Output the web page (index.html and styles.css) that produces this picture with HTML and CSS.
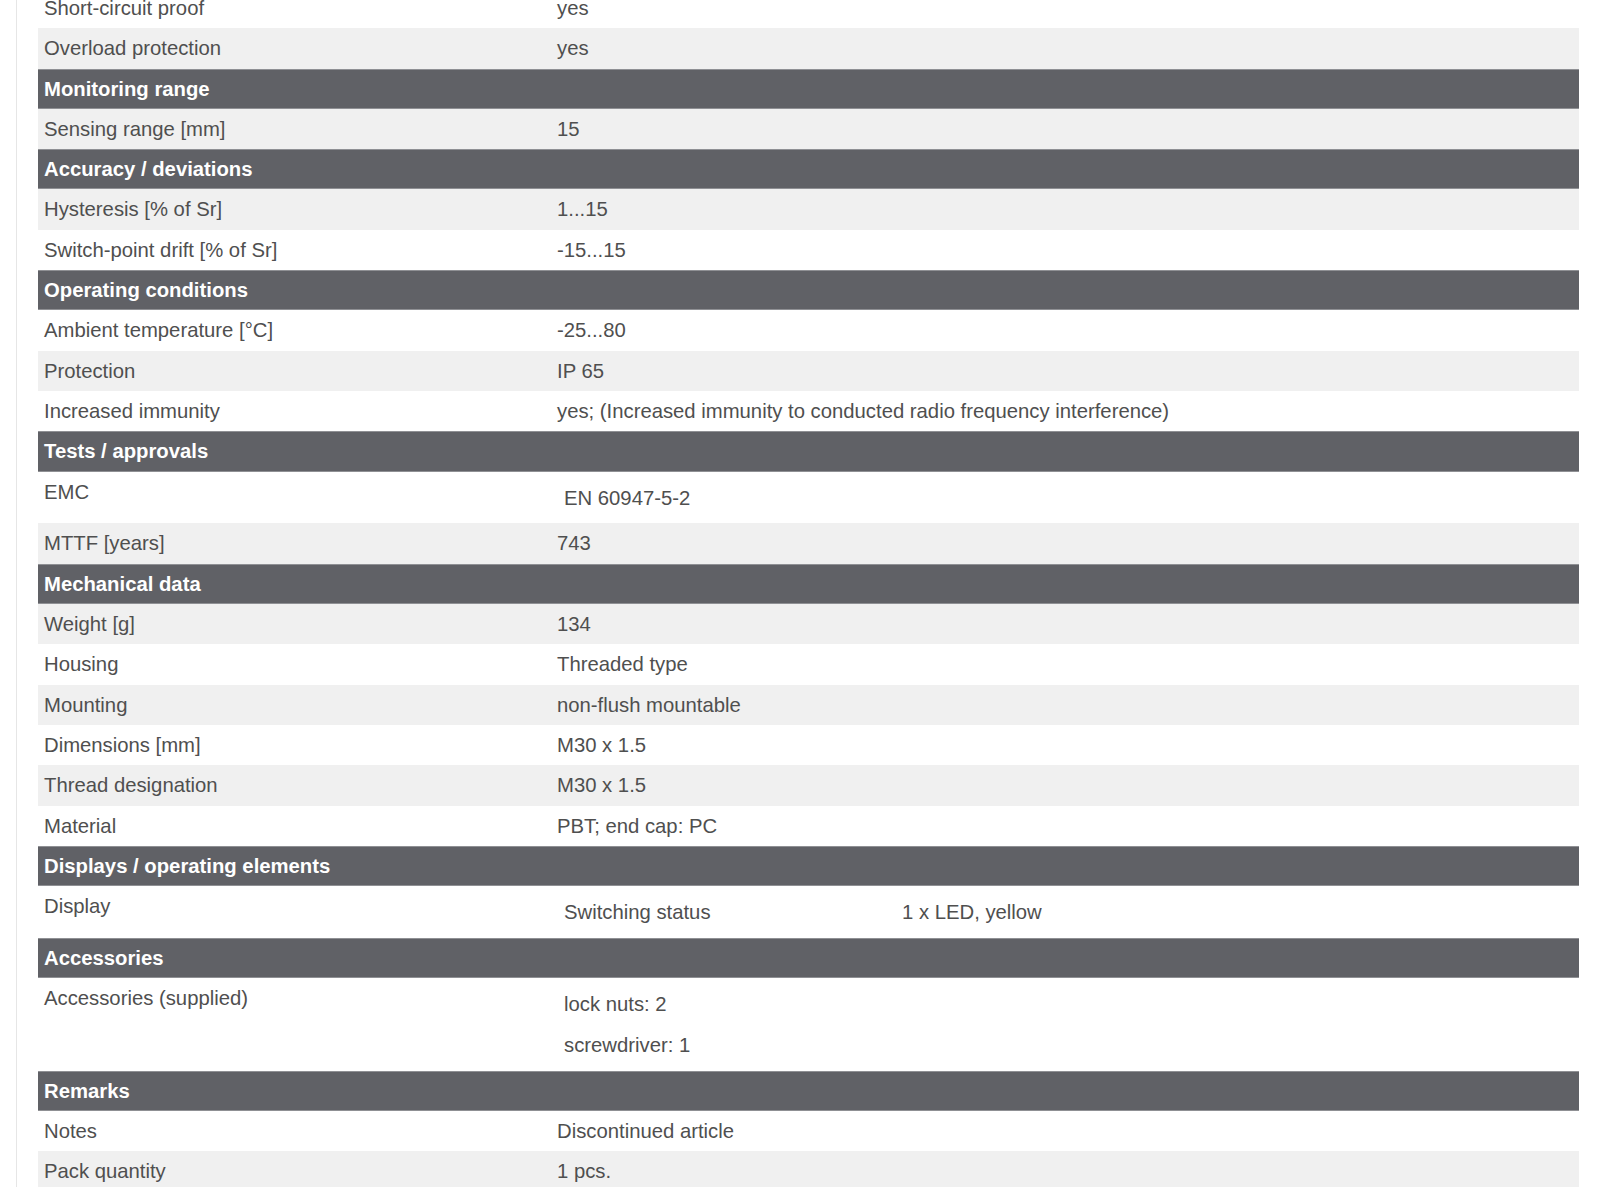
FILE: index.html
```html
<!DOCTYPE html>
<html lang="en">
<head>
<meta charset="utf-8">
<title>Technical data</title>
<link rel="stylesheet" href="styles.css">
</head>
<body>
<div class="page">
  <div class="specs">
    <div class="row"><div class="label">Short-circuit proof</div><div class="value">yes</div></div>
    <div class="row alt"><div class="label">Overload protection</div><div class="value">yes</div></div>
    <div class="head">Monitoring range</div>
    <div class="row alt"><div class="label">Sensing range [mm]</div><div class="value">15</div></div>
    <div class="head">Accuracy / deviations</div>
    <div class="row alt"><div class="label">Hysteresis [% of Sr]</div><div class="value">1...15</div></div>
    <div class="row"><div class="label">Switch-point drift [% of Sr]</div><div class="value">-15...15</div></div>
    <div class="head">Operating conditions</div>
    <div class="row"><div class="label">Ambient temperature [°C]</div><div class="value">-25...80</div></div>
    <div class="row alt"><div class="label">Protection</div><div class="value">IP 65</div></div>
    <div class="row"><div class="label">Increased immunity</div><div class="value">yes; (Increased immunity to conducted radio frequency interference)</div></div>
    <div class="head">Tests / approvals</div>
    <div class="row tall"><div class="label">EMC</div>
      <div class="value sub">
        <div class="subrow"><div class="subcell">EN 60947-5-2</div></div>
      </div>
    </div>
    <div class="row alt"><div class="label">MTTF [years]</div><div class="value">743</div></div>
    <div class="head">Mechanical data</div>
    <div class="row alt"><div class="label">Weight [g]</div><div class="value">134</div></div>
    <div class="row"><div class="label">Housing</div><div class="value">Threaded type</div></div>
    <div class="row alt"><div class="label">Mounting</div><div class="value">non-flush mountable</div></div>
    <div class="row"><div class="label">Dimensions [mm]</div><div class="value">M30 x 1.5</div></div>
    <div class="row alt"><div class="label">Thread designation</div><div class="value">M30 x 1.5</div></div>
    <div class="row"><div class="label">Material</div><div class="value">PBT; end cap: PC</div></div>
    <div class="head">Displays / operating elements</div>
    <div class="row tall"><div class="label">Display</div>
      <div class="value sub">
        <div class="subrow"><div class="subcell first">Switching status</div><div class="subcell">1 x LED, yellow</div></div>
      </div>
    </div>
    <div class="head">Accessories</div>
    <div class="row tall"><div class="label">Accessories (supplied)</div>
      <div class="value sub">
        <div class="subrow"><div class="subcell">lock nuts: 2</div></div>
        <div class="subrow"><div class="subcell">screwdriver: 1</div></div>
      </div>
    </div>
    <div class="head">Remarks</div>
    <div class="row"><div class="label">Notes</div><div class="value">Discontinued article</div></div>
    <div class="row alt"><div class="label">Pack quantity</div><div class="value">1 pcs.</div></div>
  </div>
</div>
</body>
</html>
```

FILE: styles.css
```css
html, body {
  margin: 0;
  padding: 0;
  background: #ffffff;
  overflow: hidden;
}

body {
  font-family: "Liberation Sans", Arial, sans-serif;
  font-size: 20.3px;
  color: #4f4f4f;
}

.page {
  margin-left: 16px;
  border-left: 1px solid #e6e6e6;
  padding: 0 21px;
  min-height: 100vh;
}

.specs {
  margin-top: -12px;
  display: flex;
  flex-direction: column;
}

.row {
  display: grid;
  grid-template-columns: 513px 1fr;
  height: 40.3px;
  line-height: 40.3px;
  background: #ffffff;
}

.row.alt {
  background: #f0f0f0;
}

.row.tall {
  height: auto;
  align-items: start;
}

.label {
  padding-left: 6px;
  white-space: nowrap;
}

.value {
  padding-left: 6px;
  white-space: nowrap;
}

.value.sub {
  padding: 6px 0 5.6px 6px;
  display: flex;
  flex-direction: column;
}

.subrow {
  display: flex;
  height: 40.3px;
  line-height: 40.3px;
}

.subcell {
  padding-left: 7px;
}

.subcell.first {
  width: 331px;
}

.head {
  height: 38.3px;
  line-height: 38.3px;
  background: #606166;
  color: #ffffff;
  font-weight: bold;
  padding-left: 6px;
  border-top: 1px solid #8f9094;
  border-bottom: 1px solid #8f9094;
}
```
